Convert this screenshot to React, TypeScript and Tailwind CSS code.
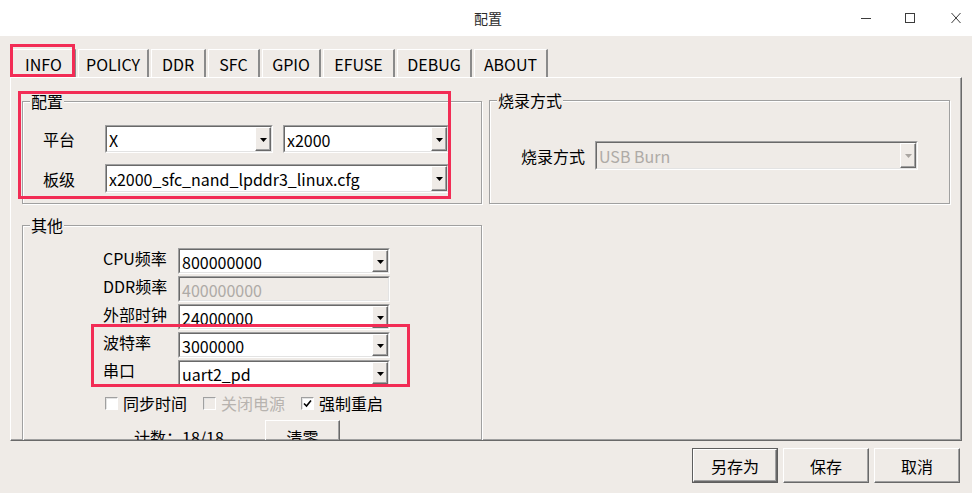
import React from "react";

const TABS = [
  { label: "INFO", w: "w-[64px]" },
  { label: "POLICY", w: "w-[71px]" },
  { label: "DDR", w: "w-[55px]" },
  { label: "SFC", w: "w-[52px]" },
  { label: "GPIO", w: "w-[59px]" },
  { label: "EFUSE", w: "w-[72px]" },
  { label: "DEBUG", w: "w-[75px]" },
  { label: "ABOUT", w: "w-[74px]" },
];

function Arrow({ disabled = false }: { disabled?: boolean }) {
  return (
    <div className="w-[16px] shrink-0 flex items-center justify-center bg-[#efebe7] border border-t-white border-l-white border-r-[#696969] border-b-[#696969] shadow-[inset_-1px_-1px_0_#a0a0a0]">
      <svg width="7" height="4" viewBox="0 0 7 4" className={disabled ? "fill-[#a9a5a1] mt-[1px]" : "fill-black mt-[1px]"}>
        <path d="M0 0h7L3.5 4z" />
      </svg>
    </div>
  );
}

function Combo({
  value,
  className,
  disabled = false,
  arrow = true,
}: {
  value: string;
  className: string;
  disabled?: boolean;
  arrow?: boolean;
}) {
  return (
    <div className={`flex shrink-0 border border-t-[#a0a0a0] border-l-[#a0a0a0] border-r-white border-b-white ${className}`}>
      <div
        className={`flex flex-1 min-w-0 border border-t-[#696969] border-l-[#696969] border-r-[#e3e3e3] border-b-[#e3e3e3] ${
          disabled ? "bg-[#efebe7]" : "bg-white"
        }`}
      >
        <span className={`flex-1 self-center pl-[2px] pt-[1px] leading-[20px] whitespace-nowrap ${disabled ? "text-[#aeaaa6]" : "text-black"}`}>
          {value}
        </span>
        {arrow && <Arrow disabled={disabled} />}
      </div>
    </div>
  );
}

function Check({ label, checked = false, disabled = false }: { label: string; checked?: boolean; disabled?: boolean }) {
  return (
    <div className="flex items-center gap-[5px]">
      <span
        className={`w-[13px] h-[13px] flex items-center justify-center border border-t-[#a0a0a0] border-l-[#a0a0a0] border-r-white border-b-white shadow-[inset_1px_1px_0_#e3e3e3] ${
          disabled ? "bg-[#efebe7]" : "bg-white"
        }`}
      >
        {checked && (
          <svg width="9" height="9" viewBox="0 0 9 9">
            <path d="M1 4.5 L3.5 7 L8 1.5" fill="none" stroke="black" strokeWidth="1.6" />
          </svg>
        )}
      </span>
      <span className={`leading-[20px] ${disabled ? "text-[#b7b3af]" : "text-black"}`}>{label}</span>
    </div>
  );
}

function Btn({ label, className, isDefault = false }: { label: string; className: string; isDefault?: boolean }) {
  return (
    <div className={`${isDefault ? "border border-[#5e5e5e]" : ""} ${className}`}>
      <div className="w-full h-full flex items-center justify-center border border-t-white border-l-white border-r-[#696969] border-b-[#696969] shadow-[inset_-1px_-1px_0_#a0a0a0] leading-[20px] text-black">
        {label}
      </div>
    </div>
  );
}

function Group({ title, className, children }: { title: string; className: string; children: React.ReactNode }) {
  return (
    <fieldset className={`border border-[#a0a0a0] shadow-[inset_1px_1px_0_#fff,1px_1px_0_#fff] ${className}`}>
      <legend className="ml-[7px] px-[1px] leading-[20px] bg-[#efebe7]">{title}</legend>
      {children}
    </fieldset>
  );
}

export default function App() {
  return (
    <div
      className="relative w-[972px] h-[493px] overflow-hidden bg-[#efebe7] text-[16px] text-black flex flex-col"
      style={{ fontFamily: '"Noto Sans CJK SC", "Noto Sans", sans-serif' }}
    >
      {/* title bar */}
      <div className="h-[36px] shrink-0 bg-white grid grid-cols-[1fr_auto_1fr] items-center">
        <div />
        <div className="text-[14px] text-[#2b2b2b] pl-[4px]">配置</div>
        <div className="flex justify-end items-center pr-[10px]">
          <svg width="12" height="12" viewBox="0 0 12 12" className="mr-[32px]">
            <path d="M1 6.5h10" stroke="#3c3c3c" strokeWidth="1" />
          </svg>
          <svg width="12" height="12" viewBox="0 0 12 12" className="mr-[34px]">
            <rect x="1.5" y="1.5" width="9" height="9" fill="none" stroke="#3c3c3c" strokeWidth="1" />
          </svg>
          <svg width="12" height="12" viewBox="0 0 12 12">
            <path d="M1.5 1 L10.5 11 M10.5 1 L1.5 11" stroke="#3c3c3c" strokeWidth="1" />
          </svg>
        </div>
      </div>

      {/* tab widget */}
      <div className="ml-[10px] mt-[13px] w-[952px]">
        <div className="flex h-[28px] pl-[2px] gap-[2px]">
          {TABS.map((t) => (
            <div
              key={t.label}
              className={`${t.w} h-full flex items-center justify-center border-t border-l border-t-white border-l-white border-r-2 border-r-[#8a8a8a] leading-[20px]`}
            >
              {t.label}
            </div>
          ))}
        </div>
        <div className="h-[364px] overflow-hidden border border-t-white border-l-white border-r-[#696969] border-b-[#696969] shadow-[inset_-1px_-1px_0_#a0a0a0] pl-[11px] pt-[13px]">
          <div className="flex gap-[7px]">
            {/* left column */}
            <div className="flex flex-col gap-[11px]">
              <Group title="配置" className="w-[460px] h-[113px]">
                <div className="pl-[20px] pt-[14px] flex flex-col gap-[11px]">
                  <div className="flex items-center">
                    <span className="w-[62px]">平台</span>
                    <Combo value="X" className="w-[168px] h-[28px]" />
                    <Combo value="x2000" className="w-[166px] h-[28px] ml-[10px]" />
                  </div>
                  <div className="flex items-center">
                    <span className="w-[62px]">板级</span>
                    <Combo value="x2000_sfc_nand_lpddr3_linux.cfg" className="w-[344px] h-[29px]" />
                  </div>
                </div>
              </Group>

              <Group title="其他" className="w-[460px] h-[240px]">
                <div className="pl-[80px] pt-[13px] flex flex-col gap-[2px]">
                  {[
                    { l: "CPU频率", v: "800000000" },
                    { l: "DDR频率", v: "400000000", d: true },
                    { l: "外部时钟", v: "24000000" },
                    { l: "波特率", v: "3000000" },
                    { l: "串口", v: "uart2_pd" },
                  ].map((r) => (
                    <div key={r.l} className="flex items-start">
                      <span className="w-[75px] leading-[20px]">{r.l}</span>
                      <Combo value={r.v} className="w-[212px] h-[26px]" disabled={r.d} arrow={!r.d} />
                    </div>
                  ))}
                </div>
                <div className="pl-[82px] mt-[8px] flex items-center gap-[16px] h-[18px]">
                  <Check label="同步时间" />
                  <Check label="关闭电源" disabled />
                  <Check label="强制重启" checked />
                </div>
                <div className="mt-[8px] flex items-center pl-[111px]">
                  <span className="w-[131px] leading-[20px]">计数：18/18</span>
                  <Btn label="清零" className="w-[75px] h-[34px]" />
                </div>
              </Group>
            </div>

            {/* right column */}
            <Group title="烧录方式" className="w-[461px] h-[114px] -mt-[1px]">
              <div className="pl-[31px] pt-[31px] flex items-center">
                <span className="w-[74px]">烧录方式</span>
                <Combo value="USB Burn" className="w-[323px] h-[29px]" disabled />
              </div>
            </Group>
          </div>
        </div>
      </div>

      {/* dialog buttons */}
      <div className="mt-[7px] flex justify-end pr-[12px] gap-[5px]">
        <Btn label="另存为" className="w-[86px] h-[35px]" isDefault />
        <Btn label="保存" className="w-[86px] h-[35px]" />
        <Btn label="取消" className="w-[86px] h-[35px]" />
      </div>

      {/* annotation boxes */}
      <div className="absolute left-[10px] top-[44px] w-[65px] h-[33px] border-[3px] border-[#f22c55]" />
      <div className="absolute left-[18px] top-[91px] w-[433px] h-[108px] border-[3px] border-[#f22c55]" />
      <div className="absolute left-[91px] top-[324px] w-[319px] h-[63px] border-[3px] border-[#f22c55]" />
    </div>
  );
}
